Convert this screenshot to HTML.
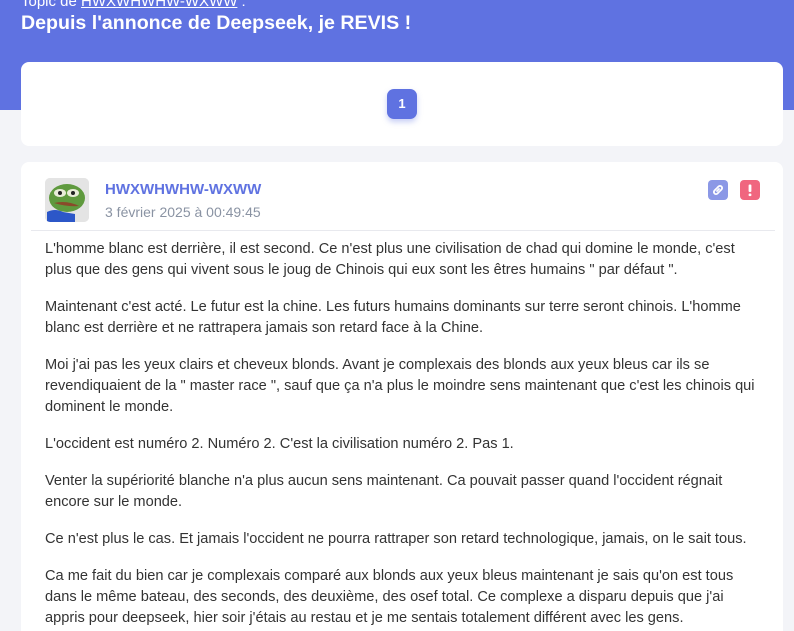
<!DOCTYPE html>
<html><head><meta charset="utf-8"><style>
*{margin:0;padding:0;box-sizing:border-box}
html,body{width:794px;height:631px;overflow:hidden}
body{background:#f3f4f8;font-family:"Liberation Sans",sans-serif;position:relative}
.hdr{position:absolute;left:0;top:0;width:794px;height:110px;background:#5f72e1}
.topic{position:absolute;left:21px;top:-7px;color:#fff;font-size:15px}
.topic u{text-decoration:underline}
.title{position:absolute;left:21px;top:12px;color:#fff;font-size:19.6px;font-weight:bold}
.card1{position:absolute;left:21px;top:62px;width:762px;height:84px;background:#fff;border-radius:8px}
.pg{position:absolute;left:366px;top:27px;width:30px;height:30px;background:#5f72e1;color:#fff;border-radius:7px;font-size:13px;font-weight:bold;text-align:center;line-height:30px;box-shadow:0 3px 6px rgba(95,114,225,.35)}
.card2{position:absolute;left:21px;top:162px;width:762px;height:480px;background:#fff;border-radius:8px}
.av{position:absolute;left:24px;top:16px;width:44px;height:44px;border-radius:5px;background:#e6e6e6;overflow:hidden}
.name{position:absolute;left:84px;top:19px;color:#5f72e1;font-weight:bold;font-size:15px}
.date{position:absolute;left:84px;top:42px;color:#8a93a3;font-size:14px}
.sep{position:absolute;left:10px;top:68px;width:744px;height:1px;background:#e8e9ee}
.b{position:absolute;top:18px;width:20px;height:20px;border-radius:4px}
.txt{position:absolute;left:24px;top:77px;width:730px;color:#333;font-size:14.6px;line-height:21px}
.txt p{margin-bottom:16px;white-space:nowrap}
</style></head><body>
<div class="hdr">
<div class="topic">Topic de <u>HWXWHWHW-WXWW</u> :</div>
<div class="title">Depuis l'annonce de Deepseek, je REVIS !</div>
</div>
<div class="card1"><div class="pg">1</div></div>
<div class="card2">
<div class="av"><svg width="44" height="44" viewBox="0 0 44 44"><rect width="44" height="44" fill="#e4e4e4"/><path d="M2 44 L2 34 Q10 30 18 34 L30 36 L30 44Z" fill="#2c57c8"/><ellipse cx="22" cy="20" rx="18" ry="14" fill="#5f9a3e"/><ellipse cx="15" cy="15" rx="6" ry="4" fill="#e8ecd8"/><ellipse cx="28" cy="15" rx="6" ry="4" fill="#e8ecd8"/><circle cx="15" cy="15" r="2" fill="#222"/><circle cx="28" cy="15" r="2" fill="#222"/><path d="M9 25 Q22 22 34 28 Q22 29 9 25Z" fill="#8a4a2a"/></svg></div>
<div class="name">HWXWHWHW-WXWW</div>
<div class="date">3 février 2025 à 00:49:45</div>
<div class="b" style="left:687px;background:#8b98e6"><svg width="20" height="20" viewBox="0 0 20 20" fill="none" stroke="#fff" stroke-width="1.8" stroke-linecap="round"><path d="M9 11 L11 9"/><path d="M8 9 L6.5 10.5 a2 2 0 0 0 3 3 L11 12"/><path d="M12 11 L13.5 9.5 a2 2 0 0 0 -3 -3 L9 8"/></svg></div>
<div class="b" style="left:719px;background:#f0667f"><svg width="20" height="20" viewBox="0 0 20 20"><rect x="8.6" y="4.5" width="2.8" height="7.5" rx="1" fill="#fff"/><rect x="8.6" y="13.5" width="2.8" height="2.6" rx="1" fill="#fff"/></svg></div>
<div class="sep"></div>
<div class="txt">
<p>L'homme blanc est derrière, il est second. Ce n'est plus une civilisation de chad qui domine le monde, c'est<br>plus que des gens qui vivent sous le joug de Chinois qui eux sont les êtres humains " par défaut ".</p>
<p>Maintenant c'est acté. Le futur est la chine. Les futurs humains dominants sur terre seront chinois. L'homme<br>blanc est derrière et ne rattrapera jamais son retard face à la Chine.</p>
<p>Moi j'ai pas les yeux clairs et cheveux blonds. Avant je complexais des blonds aux yeux bleus car ils se<br>revendiquaient de la " master race ", sauf que ça n'a plus le moindre sens maintenant que c'est les chinois qui<br>dominent le monde.</p>
<p>L'occident est numéro 2. Numéro 2. C'est la civilisation numéro 2. Pas 1.</p>
<p>Venter la supériorité blanche n'a plus aucun sens maintenant. Ca pouvait passer quand l'occident régnait<br>encore sur le monde.</p>
<p>Ce n'est plus le cas. Et jamais l'occident ne pourra rattraper son retard technologique, jamais, on le sait tous.</p>
<p>Ca me fait du bien car je complexais comparé aux blonds aux yeux bleus maintenant je sais qu'on est tous<br>dans le même bateau, des seconds, des deuxième, des osef total. Ce complexe a disparu depuis que j'ai<br>appris pour deepseek, hier soir j'étais au restau et je me sentais totalement différent avec les gens.</p>
</div>
</div>
</body></html>
